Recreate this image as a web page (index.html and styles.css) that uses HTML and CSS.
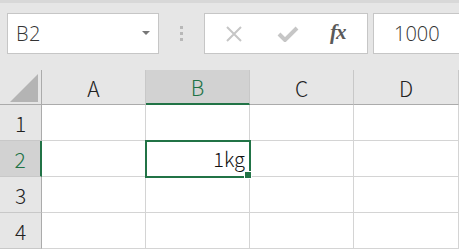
FILE: index.html
```html
<!DOCTYPE html>
<html>
<head>
<meta charset="utf-8">
<link rel="stylesheet" href="styles.css">
</head>
<body>
<div class="app">
  <div class="topstrip"></div>
  <div class="toolbar">
    <div class="namebox">
      <span class="nb-text">B2</span>
      <span class="caret"></span>
    </div>
    <div class="dots"><i></i><i></i><i></i></div>
    <div class="fbuttons">
      <svg class="ic" width="20" height="16" viewBox="0 0 20 16"><path d="M3 1 L17 15 M17 1 L3 15" stroke="#c6c6c6" stroke-width="2" fill="none"/></svg>
      <svg class="ic" width="22" height="16" viewBox="0 0 22 16"><path d="M2 8 L8 14 L20 2" stroke="#c6c6c6" stroke-width="4" fill="none"/></svg>
      <span class="fx">fx</span>
    </div>
    <div class="fvalue">1000</div>
  </div>
  <div class="sheet">
    <div class="corner"><span class="tri"></span></div>
    <div class="ch">A</div>
    <div class="ch sel">B</div>
    <div class="ch">C</div>
    <div class="ch">D</div>

    <div class="rh">1</div>
    <div class="c"></div><div class="c"></div><div class="c"></div><div class="c"></div>

    <div class="rh sel">2</div>
    <div class="c"></div><div class="c active">1kg</div><div class="c"></div><div class="c"></div>

    <div class="rh">3</div>
    <div class="c"></div><div class="c"></div><div class="c"></div><div class="c"></div>

    <div class="rh">4</div>
    <div class="c"></div><div class="c"></div><div class="c"></div><div class="c"></div>
  </div>
</div>
</body>
</html>
```
FILE: styles.css
```css
html, body {
  margin: 0;
  padding: 0;
  background: #ffffff;
}
body {
  font-family: "Noto Sans CJK JP", "Noto Sans", sans-serif;
  font-weight: 300;
  color: #222;
  width: 459px;
  height: 250px;
  overflow: hidden;
}
.app {
  background: #e6e6e6;
}
.topstrip {
  height: 3px;
  background: #d8d8d8;
}
.toolbar {
  height: 67px;
  display: flex;
  align-items: flex-start;
  padding-top: 10px;
  box-sizing: border-box;
}
.namebox {
  margin-left: 7px;
  width: 152px;
  height: 41px;
  box-sizing: border-box;
  border: 1px solid #c6c6c6;
  background: #fff;
  display: flex;
  align-items: center;
  justify-content: space-between;
  padding: 0 8px 0 8px;
}
.nb-text {
  font-family: "Open Sans", "Noto Sans", sans-serif;
  font-weight: 300;
  font-size: 20px;
  color: #333;
  letter-spacing: 0.5px;
}
.caret {
  width: 0;
  height: 0;
  border-left: 4px solid transparent;
  border-right: 4px solid transparent;
  border-top: 4px solid #777;
  margin-top: -2px;
}
.dots {
  width: 45px;
  height: 41px;
  display: flex;
  flex-direction: column;
  align-items: center;
  justify-content: center;
  gap: 3px;
}
.dots i {
  display: block;
  width: 3px;
  height: 3px;
  background: #b8b8b8;
}
.fbuttons {
  width: 164px;
  height: 41px;
  box-sizing: border-box;
  border: 1px solid #c6c6c6;
  background: #fff;
  display: flex;
  align-items: center;
  padding-left: 19px;
}
.fbuttons .ic:first-child {
  margin-right: 33px;
}
.fbuttons .ic:nth-child(2) {
  margin-right: 31px;
}
.fx {
  font-family: "Liberation Serif", "DejaVu Serif", serif;
  font-style: italic;
  font-weight: bold;
  font-size: 21px;
  color: #5a5a5a;
  letter-spacing: -1px;
  margin-top: -2px;
}
.fvalue {
  margin-left: 5px;
  flex: 1;
  height: 41px;
  box-sizing: border-box;
  border: 1px solid #c6c6c6;
  border-right: none;
  background: #fff;
  font-family: "Open Sans", "Noto Sans", sans-serif;
  font-weight: 300;
  font-size: 20px;
  color: #333;
  display: flex;
  align-items: center;
  padding-left: 20px;
}
.sheet {
  display: grid;
  grid-template-columns: 42px 104px 104px 104px 105px;
  grid-template-rows: 35px 36px 36px 36px 36px;
  background: #fff;
}
.corner {
  background: #e6e6e6;
  border-right: 1px solid #ababab;
  border-bottom: 1px solid #ababab;
  box-sizing: border-box;
  position: relative;
}
.tri {
  position: absolute;
  right: 3px;
  bottom: 2px;
  width: 0;
  height: 0;
  border-left: 28px solid transparent;
  border-bottom: 28px solid #b4b4b4;
}
.ch {
  background: #e6e6e6;
  border-right: 1px solid #c8c8c8;
  border-bottom: 1px solid #ababab;
  box-sizing: border-box;
  display: flex;
  align-items: center;
  justify-content: center;
  font-size: 21px;
  color: #222;
  padding-top: 1px;
}
.ch.sel {
  background: #d2d2d2;
  color: #217346;
  border-bottom: 2px solid #217346;
}
.rh {
  background: #e6e6e6;
  border-right: 1px solid #ababab;
  border-bottom: 1px solid #c8c8c8;
  box-sizing: border-box;
  display: flex;
  align-items: center;
  justify-content: center;
  font-size: 21px;
  color: #222;
}
.rh.sel {
  background: #d2d2d2;
  color: #217346;
  border-right: 2px solid #217346;
}
.c {
  border-right: 1px solid #d4d4d4;
  border-bottom: 1px solid #d4d4d4;
  box-sizing: border-box;
  background: #fff;
}
.c.active {
  position: relative;
  outline: 2px solid #217346;
  outline-offset: -1px;
  display: flex;
  align-items: center;
  justify-content: flex-end;
  padding-right: 4px;
  font-size: 20px;
  color: #111;
  z-index: 1;
}
.c.active::after {
  content: "";
  position: absolute;
  right: -3px;
  bottom: -3px;
  width: 6px;
  height: 6px;
  background: #217346;
  border: 1px solid #fff;
}
```
